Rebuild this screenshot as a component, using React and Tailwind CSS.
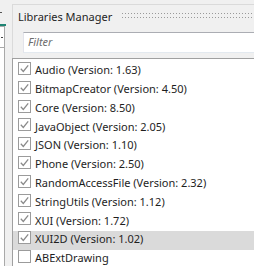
const libs = [
  { name: "Audio", version: "1.63", checked: true },
  { name: "BitmapCreator", version: "4.50", checked: true },
  { name: "Core", version: "8.50", checked: true },
  { name: "JavaObject", version: "2.05", checked: true },
  { name: "JSON", version: "1.10", checked: true },
  { name: "Phone", version: "2.50", checked: true },
  { name: "RandomAccessFile", version: "2.32", checked: true },
  { name: "StringUtils", version: "1.12", checked: true },
  { name: "XUI", version: "1.72", checked: true },
  { name: "XUI2D", version: "1.02", checked: true, selected: true },
  { name: "ABExtDrawing", checked: false },
];

function CheckBox({ checked }) {
  return (
    <div className="w-[13px] h-[13px] shrink-0 border border-[#9b9b9b] bg-white flex items-center justify-center">
      {checked && (
        <svg width="11" height="11" viewBox="0 0 11 11">
          <path d="M1.8 5.8 L4.3 8.4 L9.2 2.4" fill="none" stroke="#8a8a8a" strokeWidth="1.3" />
        </svg>
      )}
    </div>
  );
}

function Grip() {
  return (
    <svg className="flex-1 h-[6px]" height="6">
      <defs>
        <pattern id="grip" width="3" height="4" patternUnits="userSpaceOnUse">
          <rect x="0" y="0" width="1" height="1" fill="#9a9a9a" />
        </pattern>
      </defs>
      <rect x="0" y="0" width="100%" height="6" fill="url(#grip)" />
    </svg>
  );
}

export default function App() {
  return (
    <div
      className="w-[254px] h-[266px] bg-[#f0f0f0] flex overflow-hidden text-[11px] text-[#1e1e1e]"
      style={{ fontFamily: '"Noto Sans", "Open Sans", sans-serif' }}
    >
      {/* strip of the neighbouring panel */}
      <div className="w-[12px] shrink-0 flex flex-col">
        <div className="h-[24px] relative">
          <div className="absolute left-0 top-[12px] w-[2px] h-[1px] bg-[#555]" />
        </div>
        <div className="w-[6px] h-[2px] bg-[#1f8574]" />
        <div className="w-[5px] h-[21px] border-t border-r border-[#a9a9a9] bg-white relative">
          <div className="absolute left-[1px] top-[10px] w-[2px] h-[1px] bg-[#444]" />
        </div>
        <div className="w-[5px] flex-1 border-t border-r border-[#a9a9a9] bg-white" />
      </div>

      {/* Libraries Manager */}
      <div className="flex-1 mt-[4px] flex flex-col border-t border-[#dadada] min-w-0">
        <div className="h-[22px] shrink-0 flex items-center pl-[5px] gap-[10px] border-l border-[#dadada]">
          <span className="whitespace-nowrap leading-none">Libraries Manager</span>
          <Grip />
        </div>
        <div className="h-[31px] shrink-0 pl-[10px] pt-[5px] border-l border-[#dadada]">
          <div className="h-[21px] bg-white border-t border-t-[#abadb3] border-l border-l-[#e2e3ea] border-b border-b-[#e3e9ef] flex items-center pl-[4px]">
            <span className="italic text-[#6d6d6d]">Filter</span>
          </div>
        </div>
        <div className="flex-1 bg-white border-t border-l border-[#a0a0a0] pt-[3px]">
          {libs.map((lib) => (
            <div
              key={lib.name}
              className={`h-[18.8px] flex items-center pl-[5px] gap-[4px] whitespace-nowrap ${
                lib.selected ? "bg-[#dadada]" : ""
              }`}
            >
              <div className="self-start">
                <CheckBox checked={lib.checked} />
              </div>
              <span className="relative -top-[1px]">
                {lib.name}
                {lib.version && ` (Version: ${lib.version})`}
              </span>
            </div>
          ))}
        </div>
      </div>
    </div>
  );
}
